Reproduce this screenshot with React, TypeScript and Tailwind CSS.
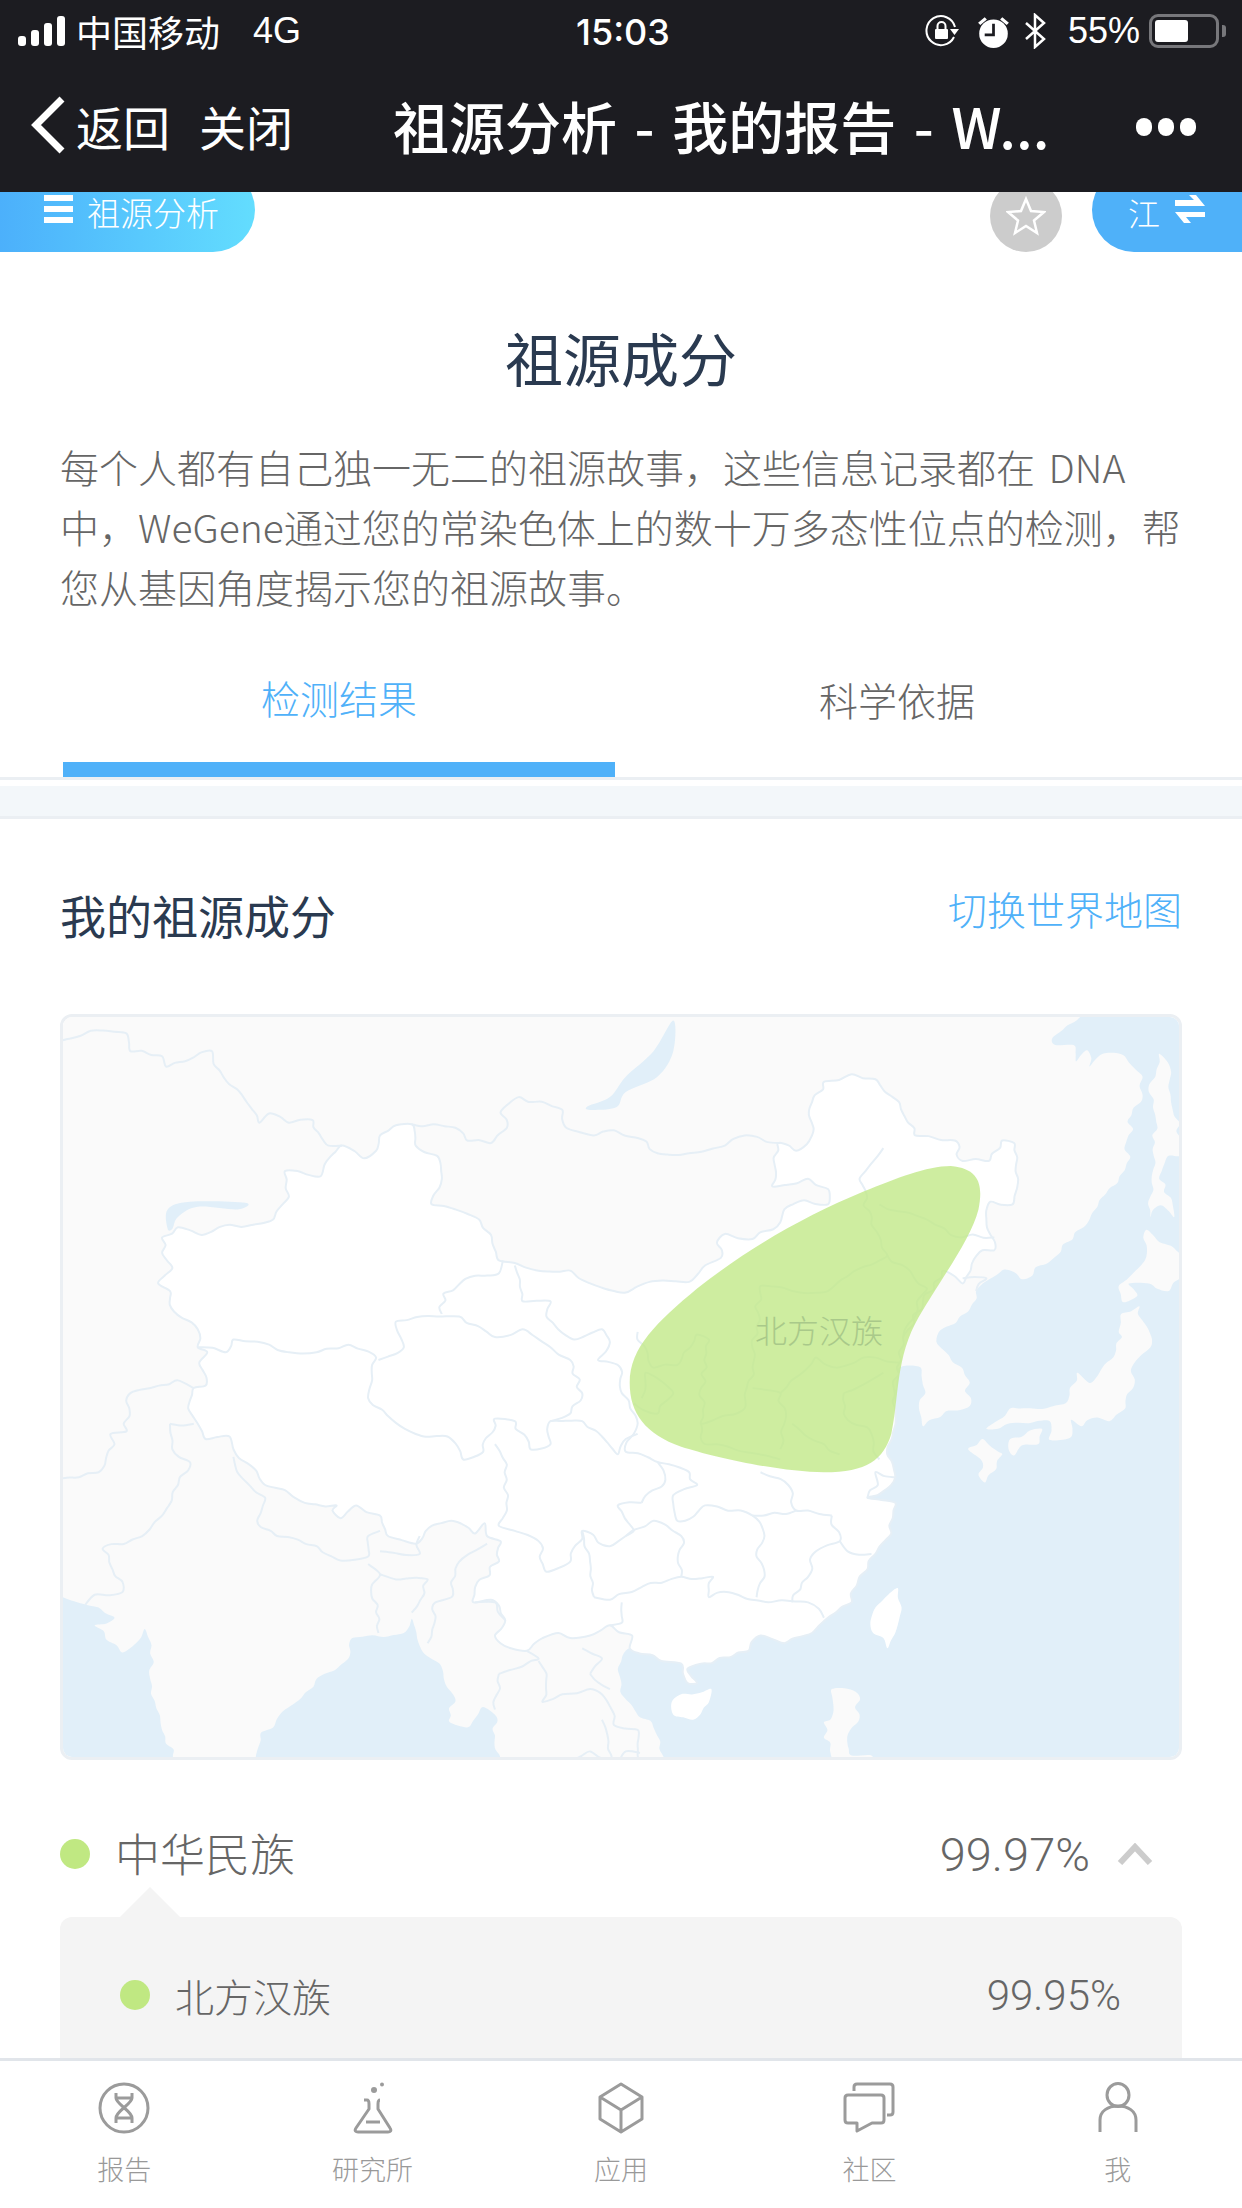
const cjk = '"Noto Sans CJK SC", "Liberation Sans", sans-serif'
const latin = '"Liberation Sans", "Noto Sans CJK SC", sans-serif'
const lightNum = 'Roboto, "Liberation Sans", sans-serif'

type Pt = number[]

function hash(x: number, y: number) {
  const v = Math.sin(x * 12.9898 + y * 78.233) * 43758.5453
  return v - Math.floor(v)
}

// breaks long segments up and nudges them so traced borders wobble like the real map
function wiggle(p: Pt[], close: boolean) {
  const out: Pt[] = []
  const n = p.length
  for (let i = 0; i < (close ? n : n - 1); i++) {
    const a = p[i]
    const b = p[(i + 1) % n]
    out.push(a)
    const dx = b[0] - a[0]
    const dy = b[1] - a[1]
    const len = Math.hypot(dx, dy)
    const parts = Math.floor(len / 13)
    for (let k = 1; k < parts; k++) {
      const t = k / parts
      const r = hash(Math.round(a[0] + b[0]) + k * 3.1, Math.round(a[1] + b[1]) + k * 1.7) - 0.5
      const amp = 9 * r
      out.push([a[0] + dx * t - (dy / len) * amp, a[1] + dy * t + (dx / len) * amp])
    }
  }
  if (!close) out.push(p[n - 1])
  return out
}

// turns "x,y x,y ..." into a smooth path
function smooth(points: string, close = false, wobble = true) {
  const raw = points.trim().split(/\s+/).map((s) => s.split(',').map(Number))
  const p = wobble ? wiggle(raw, close) : raw
  let d = `M${p[0][0]} ${p[0][1]}`
  const n = p.length
  for (let i = 0; i < (close ? n : n - 1); i++) {
    const a = close ? p[(i - 1 + n) % n] : p[Math.max(i - 1, 0)]
    const b = p[i]
    const c = p[(i + 1) % n]
    const e = close ? p[(i + 2) % n] : p[Math.min(i + 2, n - 1)]
    const c1x = b[0] + (c[0] - a[0]) / 6
    const c1y = b[1] + (c[1] - a[1]) / 6
    const c2x = c[0] - (e[0] - b[0]) / 6
    const c2y = c[1] - (e[1] - b[1]) / 6
    d += `C${c1x} ${c1y} ${c2x} ${c2y} ${c[0]} ${c[1]}`
  }
  return close ? d + 'Z' : d
}

const eastSea =
  '1365,30 1340,60 1328,75 1332,88 1355,88 1358,120 1372,98 1375,130 1392,105 1418,108 1442,150 1442,185 1428,225 1422,320 1385,405 1330,505 1290,547 1268,528 1232,570 1222,610 1185,650 1182,670 1218,735 1224,795 1195,805 1165,835 1160,800 1168,770 1162,720 1135,720 1130,800 1120,890 1130,935 1125,950 1095,975 1130,985 1125,1045 1105,1085 1095,1115 1085,1130 1075,1180 1045,1210 1025,1240 990,1260 960,1245 945,1275 885,1300 868,1310 880,1338 868,1338 860,1300 835,1295 795,1270 780,1310 790,1370 825,1425 840,1495'
const bengal =
  '630,1495 625,1400 610,1385 590,1425 568,1415 572,1360 555,1300 530,1265 520,1212 510,1240 445,1250 440,1290 410,1320 370,1380 345,1425 330,1435 323,1495'
const arabian =
  '70,1150 88,1175 110,1185 145,1210 120,1225 155,1278 178,1250 183,1232 190,1280 190,1330 205,1430 222,1495'

const china =
  '432,285 460,310 475,295 480,265 500,245 520,243 525,285 552,305 558,350 545,400 575,410 605,430 620,460 630,510 650,515 680,530 720,530 745,555 775,570 790,573 820,552 870,552 890,520 910,505 905,475 915,458 950,468 985,435 990,410 1015,392 1045,400 1045,370 1020,350 975,365 982,280 1005,295 1025,265 1025,200 1040,160 1075,145 1105,155 1135,200 1155,265 1205,275 1215,315 1248,315 1265,275 1280,280 1285,350 1278,400 1250,395 1245,430 1255,490 1240,490 1225,530 1215,555 1190,530 1165,590 1140,660 1132,720 1130,800 1120,890 1130,935 1125,950 1095,975 1130,985 1125,1045 1105,1085 1095,1115 1085,1130 1075,1180 1045,1210 1025,1240 990,1260 960,1245 945,1275 885,1300 868,1310 880,1338 868,1338 860,1300 835,1295 795,1270 798,1245 770,1225 745,1245 720,1250 705,1240 685,1250 665,1275 645,1270 625,1245 638,1215 620,1175 598,1180 600,1150 630,1100 632,1060 615,1050 612,1025 600,1045 570,1020 545,1030 525,1065 490,1050 480,1010 450,990 430,1015 420,1000 425,990 385,985 360,960 335,950 315,910 295,880 290,855 260,860 250,830 238,800 245,760 260,755 252,710 262,690 250,680 250,645 220,610 215,570 200,555 218,525 205,495 205,465 225,445 255,460 290,440 320,440 345,430 365,385 360,335 405,345 410,322'

const islands = [
  { fill: '#fafafa', pts: '1463,105 1478,140 1478,200 1490,270 1490,305 1475,305 1463,350 1480,400 1482,425 1465,402 1452,425 1458,225 1450,180' },
  { fill: '#fafafa', pts: '1447,450 1495,505 1495,540 1475,570 1450,555 1425,555 1435,580 1418,592 1412,560 1440,520 1447,480' },
  { fill: '#fafafa', pts: '1438,600 1415,615 1412,650 1416,660 1405,700 1375,750 1360,730 1345,790 1330,795 1285,800 1275,800 1245,840 1285,828 1325,825 1325,862 1350,858 1352,822 1365,835 1385,818 1400,825 1420,800 1430,760 1432,710 1452,680' },
  { fill: '#fafafa', pts: '1222,880 1240,860 1260,885 1265,890 1243,945 1235,930 1238,900' },
  { fill: '#fafafa', pts: '1275,860 1315,840 1310,870 1290,872 1280,892 1273,880' },
  { fill: '#ffffff', pts: '1133,1152 1138,1190 1130,1240 1120,1270 1115,1250 1102,1240 1105,1190' },
  { fill: '#ffffff', pts: '860,1360 898,1350 895,1375 875,1410 850,1400 848,1375' },
  { fill: '#fafafa', pts: '1050,1350 1080,1355 1085,1400 1070,1440 1075,1480 1100,1480 1100,1500 1050,1500 1048,1455 1040,1445 1040,1415 1048,1410' },
]

const borders = [
  '70,82 115,60 160,65 165,100 205,110 210,130 268,100 270,125 300,175 328,240 340,222 365,240 395,235 415,285 432,285',
  '520,243 575,250 590,275 620,280 640,250 632,220 655,190 710,215 715,250 750,265 775,255 805,270 830,300 870,300 915,285 940,265 985,280',
  '70,940 100,935 125,925 145,870 140,850 160,845 165,770 225,745 245,760',
  '215,830 218,880 240,905 225,950 205,1010 180,1050 130,1075 155,1140 155,1160 120,1165 108,1185',
  '215,830 245,830',
  '295,895 300,925 335,975 325,1020 350,1050 400,1070 430,1098 465,1090 465,1050 480,1040',
  '480,1080 530,1085 530,1050',
  '465,1105 480,1125 470,1145 478,1240',
  '520,1200 540,1135 500,1135 480,1125',
  '540,1260 550,1180 570,1170 580,1100 615,1065',
  '600,1180 625,1180 638,1215',
  '680,1295 690,1320 685,1375 710,1360 745,1350 765,1370 775,1420 805,1430 808,1495',
  '630,1320 670,1295 680,1290 665,1275',
  '630,1320 625,1390',
  '745,1320 760,1290 735,1270',
  '745,1320 770,1350',
  '760,1410 772,1495',
  '722,1490 745,1472 775,1490',
  '782,1490 790,1472 808,1475',
  // inside China
  '250,680 285,690 295,665 340,675 365,690 400,690 440,675 475,700 470,745 465,780 490,815 525,850 565,855 585,900 610,885 625,820 650,825 670,880 695,870 695,825 735,825 760,855 780,890 790,860 805,850',
  '478,705 510,680 500,630 555,620 580,620 625,660 660,645 695,680 720,705 735,770 720,810 695,825',
  '558,615 560,575 600,540 630,535 635,510',
  '650,520 660,590 695,590 690,620 725,665 760,645 770,670 755,705 780,715 785,770 805,830 800,850 790,885 830,905 870,925 880,950 850,970 855,1020 865,1020 890,990 935,1000 950,1010 965,1050 955,1090 965,1130 955,1170',
  '625,870 640,910 640,1000 630,1030 650,1040 680,1060 690,1120 720,1100 735,1040 770,1070 790,1050 825,1020 860,1050 860,1130',
  '750,1170 770,1175 810,1150 860,1130 900,1130 895,1170 920,1160 970,1180 1020,1180 1040,1210',
  '785,1180 785,1220 770,1225',
  '735,1040 745,1100 750,1170',
  '810,985 780,990 800,1040 790,1050',
  '830,905 840,940 810,985',
  '1050,1010 1020,1000 1005,1000 995,950 960,925',
  '950,1010 1005,1000',
  '1050,1010 1060,1060 1030,1080 1020,1130 1000,1180',
  '1060,1060 1070,1080 1100,1085',
  '1130,935 1105,925 1108,950 1095,975',
  // under the blob
  '805,650 825,720 855,715 880,655 895,665 885,760 885,830 940,800 950,720 955,640 960,560 1000,570 1045,570 1060,550 1120,500 1100,440 1085,350 1100,320 1115,290',
  '885,830 890,870 985,900',
  '950,760 985,770 990,830 985,880',
  '985,770 1030,700 1055,720 1090,700 1135,710',
  '1065,770 1065,810 1100,850 1110,900',
  '1000,830 1040,870 1060,890',
  '1065,770 1115,730',
  '1110,400 1170,430 1200,460 1255,465',
  '800,790 830,810 850,770 815,730 810,780',
  '1120,500 1170,565 1140,660',
  '1215,545 1245,545 1232,570',
]

function ChinaMap() {
  return (
    <svg viewBox="80 33 1408 1450" preserveAspectRatio="none" className="block w-full h-full">
      <rect x="60" y="20" width="1450" height="1490" fill="#fafafa" />
      <path d={smooth(eastSea) + 'L1510 1495L1510 20Z'} fill="#e1eff9" />
      <path d={smooth(bengal) + 'Z'} fill="#e1eff9" />
      <path d={smooth(arabian) + 'L70 1495Z'} fill="#e1eff9" />
      <path d={smooth('850,40 850,100 830,150 790,180 778,210 745,215 742,208 770,190 790,150 825,100', true, false)} fill="#e1eff9" />
      <path d={smooth('212,448 212,410 240,395 310,397 300,410 250,405 225,425 218,448', true, false)} fill="#e1eff9" />
      {islands.map((isl) => (
        <path key={isl.pts} d={smooth(isl.pts, true)} fill={isl.fill} />
      ))}
      <path d={smooth(china, true)} fill="#ffffff" stroke="#e6eff6" strokeWidth="2" vectorEffect="non-scaling-stroke" />
      {borders.map((b) => (
        <path key={b} d={smooth(b)} fill="none" stroke="#e6eff6" strokeWidth="2" vectorEffect="non-scaling-stroke" />
      ))}
      <path
        d="M1200 325C1240 330 1240 370 1235 410C1225 470 1190 540 1160 620C1130 700 1135 780 1125 850C1115 900 1095 925 1040 925C985 925 900 895 860 875C815 850 795 810 795 750C795 680 830 630 880 565C950 480 1020 420 1090 375C1130 350 1170 325 1200 325Z"
        fill="#c2e888"
        fillOpacity="0.8"
      />
    </svg>
  )
}

function SignalBars() {
  return (
    <svg width="48" height="30" viewBox="0 0 48 30" fill="#fff">
      <rect x="0" y="20" width="8" height="10" rx="3" />
      <rect x="13" y="14" width="8" height="16" rx="3" />
      <rect x="26" y="7" width="8" height="23" rx="3" />
      <rect x="39" y="0" width="8" height="30" rx="3" />
    </svg>
  )
}

function StatusRight() {
  return (
    <div className="flex items-center text-white">
      {/* rotation lock */}
      <svg width="34" height="34" viewBox="0 0 34 34" fill="none" className="mr-[18px]">
        <path d="M29 23A14.5 14.5 0 1 1 30 13" stroke="#fff" strokeWidth="2" />
        <path d="M25 15h9l-4.500 6z" fill="#fff" />
        <rect x="10" y="15" width="13" height="10" rx="1" fill="#fff" />
        <path d="M12.500 15v-3a4 4 0 0 1 8 0v3" stroke="#fff" strokeWidth="2" />
      </svg>
      {/* alarm */}
      <svg width="33" height="33" viewBox="0 0 30 30" className="mr-[14px]">
        <circle cx="15" cy="17" r="13" fill="#fff" />
        <path d="M1 7l6-5 2 2-6 5zM29 7l-6-5-2 2 6 5z" fill="#fff" />
        <path d="M15 8v10H7" stroke="#1c1c21" strokeWidth="2.500" fill="none" />
      </svg>
      {/* bluetooth */}
      <svg width="22" height="36" viewBox="0 0 22 36" fill="none" className="mr-[22px]">
        <path d="M2 10l18 16-9 8V2l9 8L2 26" stroke="#fff" strokeWidth="2.500" />
      </svg>
      <span className="text-[36px] leading-none w-[72px]" style={{ fontFamily: latin }}>
        55%
      </span>
      <div className="ml-[9px] w-[70px] h-[34px] rounded-[9px] border-[3px] border-[#77777b] p-[3px]">
        <div className="h-full w-[33px] bg-white rounded-[3px]" />
      </div>
      <div className="ml-[3px] w-[4px] h-[12px] bg-[#77777b] rounded-r-[3px]" />
    </div>
  )
}

const tabs = [
  {
    label: '报告',
    icon: (
      <svg width="52" height="52" viewBox="0 0 52 52" fill="none" stroke="#9b9b9b" strokeWidth="3">
        <circle cx="26" cy="26" r="24" />
        <path d="M18 11v5c0 6 16 13 16 20v5M34 11v5c0 6-16 13-16 20v5M18 16h16M18 36h16" />
      </svg>
    ),
  },
  {
    label: '研究所',
    icon: (
      <svg width="52" height="52" viewBox="0 0 52 52" fill="none" stroke="#9b9b9b" strokeWidth="3">
        <path d="M17 18h3c2 0 2 2 2 4v5L9 46c-2 3 0 4 2 4h30c2 0 4-1 2-4L31 27v-5c0-2 0-4 2-4" strokeLinejoin="round" />
        <path d="M19 40h14" />
        <circle cx="27" cy="8" r="3" fill="#9b9b9b" stroke="none" />
        <circle cx="35" cy="2.500" r="2" fill="#9b9b9b" stroke="none" />
      </svg>
    ),
  },
  {
    label: '应用',
    icon: (
      <svg width="46" height="52" viewBox="0 0 46 52" fill="none" stroke="#9b9b9b" strokeWidth="3" strokeLinejoin="round">
        <path d="M23 2l21 13v22L23 50 2 37V15zM2 15l21 13 21-13M23 28v22" />
      </svg>
    ),
  },
  {
    label: '社区',
    icon: (
      <svg width="52" height="52" viewBox="0 0 52 52" fill="none" stroke="#9b9b9b" strokeWidth="3" strokeLinejoin="round">
        <path d="M11 9V5c0-2 1-3 3-3h33c2 0 3 1 3 3v25c0 2-1 3-3 3h-3" />
        <path d="M5 13h33c2 0 3 1 3 3v22c0 2-1 3-3 3h-9L14 49v-8H5c-2 0-3-1-3-3V16c0-2 1-3 3-3z" />
      </svg>
    ),
  },
  {
    label: '我',
    icon: (
      <svg width="40" height="52" viewBox="0 0 40 52" fill="none" stroke="#9b9b9b" strokeWidth="3">
        <ellipse cx="20" cy="13" rx="11" ry="11.500" />
        <path d="M2 50V38c0-9 8-14 18-14s18 5 18 14v12" />
      </svg>
    ),
  },
]

export default function App() {
  return (
    <div className="w-[1242px] h-[2208px] flex flex-col overflow-hidden bg-white font-light" style={{ fontFamily: cjk }}>
      {/* Status + nav bar */}
      <header className="h-[192px] shrink-0 bg-[#1c1c21] text-white font-normal">
        <div className="relative h-[60px] flex items-center justify-between pl-[18px] pr-[16px] pt-[2px]">
          <div className="flex items-center">
            <SignalBars />
            <span className="ml-[10px] text-[36px] leading-none">中国移动</span>
            <span className="ml-[33px] text-[36px] leading-none" style={{ fontFamily: latin }}>
              4G
            </span>
          </div>
          <span
            className="absolute left-[576px] top-[14px] text-[36px] leading-none font-medium"
            style={{ fontFamily: 'Inter, "Liberation Sans", sans-serif' }}
          >
            15:03
          </span>
          <StatusRight />
        </div>
        <div className="h-[132px] flex items-center pb-[2px]">
          <svg width="36" height="58" viewBox="0 0 36 58" fill="none" className="ml-[30px]">
            <path d="M32 3L6 29l26 26" stroke="#fff" strokeWidth="7" />
          </svg>
          <span className="ml-[10px] text-[47px] leading-none">返回</span>
          <span className="ml-[29px] text-[47px] leading-none">关闭</span>
          <span className="ml-[100px] w-[743px] text-[56px] leading-none font-medium whitespace-nowrap [word-spacing:5px]">
            祖源分析 - 我的报告 - W...
          </span>
          <div className="mt-[3px] flex gap-[6px]">
            <div className="w-[16px] h-[18px] rounded-full bg-white" />
            <div className="w-[16px] h-[18px] rounded-full bg-white" />
            <div className="w-[16px] h-[18px] rounded-full bg-white" />
          </div>
        </div>
      </header>

      <main className="flex-1 min-h-0 overflow-hidden">
        {/* Floating buttons, cut off by the nav bar */}
        <div className="-mt-[24px] h-[84px] flex items-center justify-between">
          <div className="w-[255px] h-full rounded-r-[42px] bg-gradient-to-r from-[#4cb0fb] to-[#63ddfe] flex items-center pt-[4px] pl-[44px] text-white">
            <div className="mb-[6px] w-[29px] flex flex-col gap-[5px]">
              <div className="h-[6px] bg-white" />
              <div className="h-[6px] bg-white" />
              <div className="h-[6px] bg-white" />
            </div>
            <span className="ml-[14px] text-[33px] leading-none">祖源分析</span>
          </div>
          <div className="flex items-end h-full">
            <div className="w-[72px] h-[72px] rounded-full bg-[#cccccc] flex items-center justify-center">
              <svg width="40" height="40" viewBox="0 0 40 40" fill="none">
                <path d="M20 3l5 12 13 1-10 8.500L31 37l-11-7-11 7 3-12.500L2 16l13-1z" stroke="#fff" strokeWidth="2.500" />
              </svg>
            </div>
            <div className="ml-[30px] w-[150px] h-full rounded-l-[42px] bg-[#4fb1f9] flex items-center pl-[36px] pt-[4px] text-white">
              <span className="text-[32px] leading-none">江</span>
              <svg width="30" height="28" viewBox="0 0 30 28" fill="#fff" className="ml-[15px] mb-[6px]">
                <path d="M0 5h19l-5-5h7l9 11H0zM30 17v5H11l5 6H9L0 17z" />
              </svg>
            </div>
          </div>
        </div>

        {/* Intro */}
        <div className="px-[60px]">
          <h1 className="mt-[75px] text-center text-[58px] leading-[60px] text-[#2a3a50] font-normal">祖源成分</h1>
          <p className="mt-[49px] text-[39px] leading-[60px] text-[#666666] [word-spacing:5px]">
            每个人都有自己独一无二的祖源故事，这些信息记录都在 DNA 中，WeGene通过您的常染色体上的数十万多态性位点的检测，帮您从基因角度揭示您的祖源故事。
          </p>
        </div>

        {/* Tabs */}
        <div className="mt-[30px] h-[134px] border-b-[3px] border-[#ebeff3] flex pl-[63px] pr-[63px]">
          <div className="w-[552px] flex flex-col justify-between items-center">
            <span className="mt-[26px] text-[39px] leading-[50px] text-[#4fb1f9]">检测结果</span>
            <div className="h-[15px] w-full bg-[#4fb1f9]" />
          </div>
          <div className="flex-1 flex justify-center">
            <span className="mt-[28px] text-[39px] leading-[50px] text-[#666666]">科学依据</span>
          </div>
        </div>
        <div className="mt-[6px] h-[33px] bg-[#f3f7fa] border-b-[3px] border-[#ebeff3]" />

        {/* My ancestry */}
        <section className="px-[60px]">
          <div className="mt-[63px] flex items-start justify-between">
            <h2 className="text-[46px] leading-[64px] text-[#2a3a50] font-normal">我的祖源成分</h2>
            <span className="mt-[1px] text-[39px] leading-[50px] text-[#4fb1f9]">切换世界地图</span>
          </div>
          <div className="relative mt-[68px] h-[746px] rounded-[12px] border-[3px] border-[#ebeff3] overflow-hidden">
            <ChinaMap />
            <span className="absolute left-[692px] top-[292px] text-[32px] leading-[40px] text-[#a9c98a]">北方汉族</span>
          </div>

          <div className="mt-[64px] flex items-center h-[60px]">
            <div className="w-[30px] h-[30px] rounded-full bg-[#c0e882]" />
            <span className="mb-[3px] ml-[25px] text-[45px] leading-none text-[#666666]">中华民族</span>
            <span className="ml-auto text-[47px] leading-none text-[#666666]" style={{ fontFamily: lightNum }}>
              99.97%
            </span>
            <svg width="36" height="22" viewBox="0 0 36 22" fill="none" className="ml-[27px] mr-[29px]">
              <path d="M3 20L18 4l15 16" stroke="#cccccc" strokeWidth="6" />
            </svg>
          </div>

          <div className="relative mt-[33px] h-[300px] rounded-[12px] bg-[#f4f4f4] pl-[60px] pr-[61px] pt-[48px]">
            <div className="absolute left-[60px] -top-[30px] border-x-[30px] border-b-[30px] border-x-transparent border-b-[#f4f4f4]" />
            <div className="flex items-center h-[60px]">
              <div className="w-[30px] h-[30px] rounded-full bg-[#c0e882]" />
              <span className="ml-[25px] text-[39px] leading-none text-[#666666]">北方汉族</span>
              <span className="mt-[2px] ml-auto text-[42px] leading-none text-[#666666]" style={{ fontFamily: lightNum }}>
                99.95%
              </span>
            </div>
          </div>
        </section>
      </main>

      {/* Bottom tab bar */}
      <nav className="h-[150px] shrink-0 bg-white border-t-[3px] border-[#e1e5ea] flex">
        {tabs.map((tab) => (
          <div key={tab.label} className="flex-1 flex flex-col items-center pt-[21px]">
            <div className="h-[52px] flex items-center justify-center">{tab.icon}</div>
            <span className="mt-[20px] text-[27px] leading-[30px] text-[#999999]">{tab.label}</span>
          </div>
        ))}
      </nav>
    </div>
  )
}
